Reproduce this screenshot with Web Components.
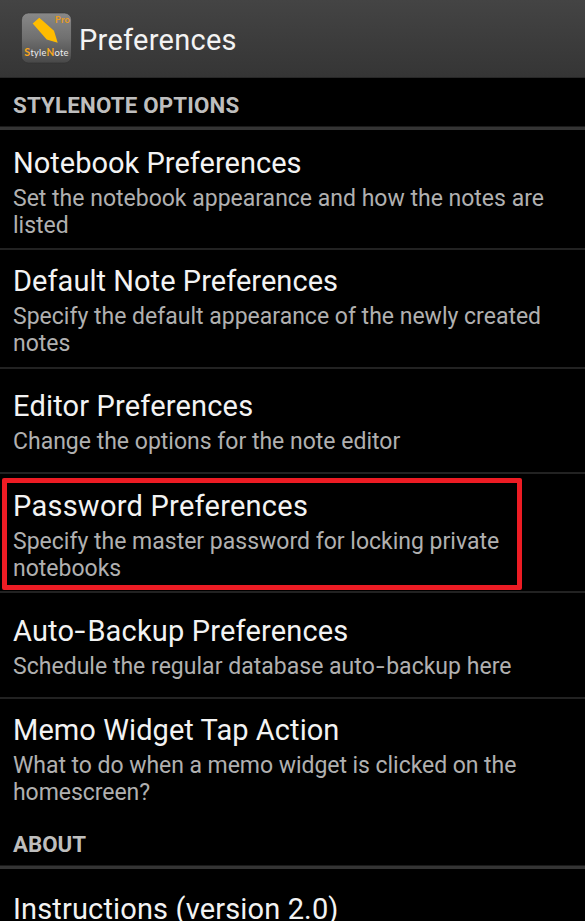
<!DOCTYPE html>
<html lang="en"><head><meta charset="utf-8"><title>Preferences</title>
<style>html,body{margin:0;background:#000;height:921px;overflow:hidden}</style></head><body>
<pref-screen></pref-screen>
<script>
const make=(n,h)=>customElements.define(n,class extends HTMLElement{constructor(){super();this.attachShadow({mode:'open'}).innerHTML=h;}});
make('app-icon',`<style>:host{display:block;width:52px;height:52px}svg{display:block}</style>
<svg width="52" height="52" viewBox="0 0 52 52"><defs><linearGradient id="g" x1="0" y1="0" x2="0" y2="1"><stop offset="0" stop-color="#888"/><stop offset=".5" stop-color="#707070"/><stop offset="1" stop-color="#484848"/></linearGradient></defs>
<rect x="1.5" y="1" width="50" height="50" rx="7" fill="url(#g)" stroke="#303030" stroke-width=".6"/>
<path d="M12.7 11.5 L19.3 5.8 L34 18.7 L37.7 30.7 L26.7 27.5 Z" fill="#ffbc00"/>
<text x="35" y="11.3" font-family="Lato" font-weight="700" font-size="9.5" fill="#e89c20" textLength="15" lengthAdjust="spacingAndGlyphs">Pro</text>
<g font-family="Lato" font-size="10" fill="#eee"><text x="4.2" y="44" font-size="11.5" fill="#f9a81c" font-weight="700" textLength="6.2" lengthAdjust="spacingAndGlyphs">S</text><text x="10.5" y="44" textLength="16" lengthAdjust="spacingAndGlyphs">tyle</text><text x="26.6" y="44" font-size="11.5" fill="#f9a81c" font-weight="700" textLength="8" lengthAdjust="spacingAndGlyphs">N</text><text x="34.5" y="44" textLength="14.3" lengthAdjust="spacingAndGlyphs">ote</text></g></svg>`);
make('app-bar',`<style>:host{display:flex;box-sizing:border-box;height:78px;padding:0 0 0 20px;align-items:center;gap:7px;background:linear-gradient(#444,#353535);border-bottom:1px solid #282828;font:29px/36px Roboto,sans-serif;letter-spacing:.27px;color:#f3f3f3}app-icon{margin-top:-2px}.t{margin-top:3px}</style><app-icon></app-icon><div class="t"><slot></slot></div>`);
make('pref-heading',`<style>:host{display:block;box-sizing:border-box;height:52px;padding:13px 13px 0;border-bottom:3px solid #343434;box-shadow:inset 0 -1px #1a1a1a;font:700 22.3px/28px Roboto,sans-serif;letter-spacing:var(--hs,.18px);color:#bebebe}</style><slot></slot>`);
make('pref-item',`<style>:host{display:block;box-sizing:border-box;height:var(--h,119px);padding:var(--pt,13px) 13px 0;border-bottom:2px solid #222;font-family:Roboto,sans-serif;white-space:pre}:host([last]){border:0}.t{font-size:29px;line-height:38px;color:#f3f3f3;letter-spacing:var(--ts,0)}.s{margin-top:3px;font-size:23px;line-height:27px;color:#b0b0b0;letter-spacing:var(--ss,0)}</style><div class="t"><slot name="title"></slot></div><div class="s"><slot></slot></div>`);
make('pref-screen',`<style>:host{display:block;position:relative;width:585px;height:921px;overflow:hidden;background:#000}.mark{position:absolute;left:2px;top:478px;width:520px;height:112px;box-sizing:border-box;border:5px solid #ed1c24;border-radius:2px}.h{display:inline-block;transform:scaleX(1.35);margin:0 3px 0 2px}</style>
<app-bar>Preferences</app-bar>
<pref-heading>STYLENOTE OPTIONS</pref-heading>
<pref-item style="--h:120px;--pt:14px;--ts:.02px"><span slot="title">Notebook Preferences</span>Set the notebook appearance and how the notes are<br>listed</pref-item>
<pref-item style="--pt:12px;--ts:.04px"><span slot="title">Default Note Preferences</span>Specify the default appearance of the newly created<br>notes</pref-item>
<pref-item style="--h:105px;--pt:18px;--ts:.17px"><span slot="title">Editor Preferences</span>Change the options for the note editor</pref-item>
<pref-item style="--ts:.25px"><span slot="title">Password Preferences</span>Specify the master password for locking private<br>notebooks</pref-item>
<pref-item style="--h:106px;--pt:19px;--ts:.17px;--ss:.02px"><span slot="title">Auto<span class="h">-</span>Backup Preferences</span>Schedule the regular database auto<span class="h">-</span>backup here</pref-item>
<pref-item last style="--h:118px;--pt:12px;--ts:.07px;--ss:-.05px"><span slot="title">Memo Widget Tap Action</span>What to do when a memo widget is clicked on the<br>homescreen?</pref-item>
<pref-heading style="--hs:0">ABOUT</pref-heading>
<pref-item style="--pt:21px;--ts:.15px"><span slot="title">Instructions (version 2.0)</span></pref-item>
<div class="mark"></div>`);
</script></body></html>
